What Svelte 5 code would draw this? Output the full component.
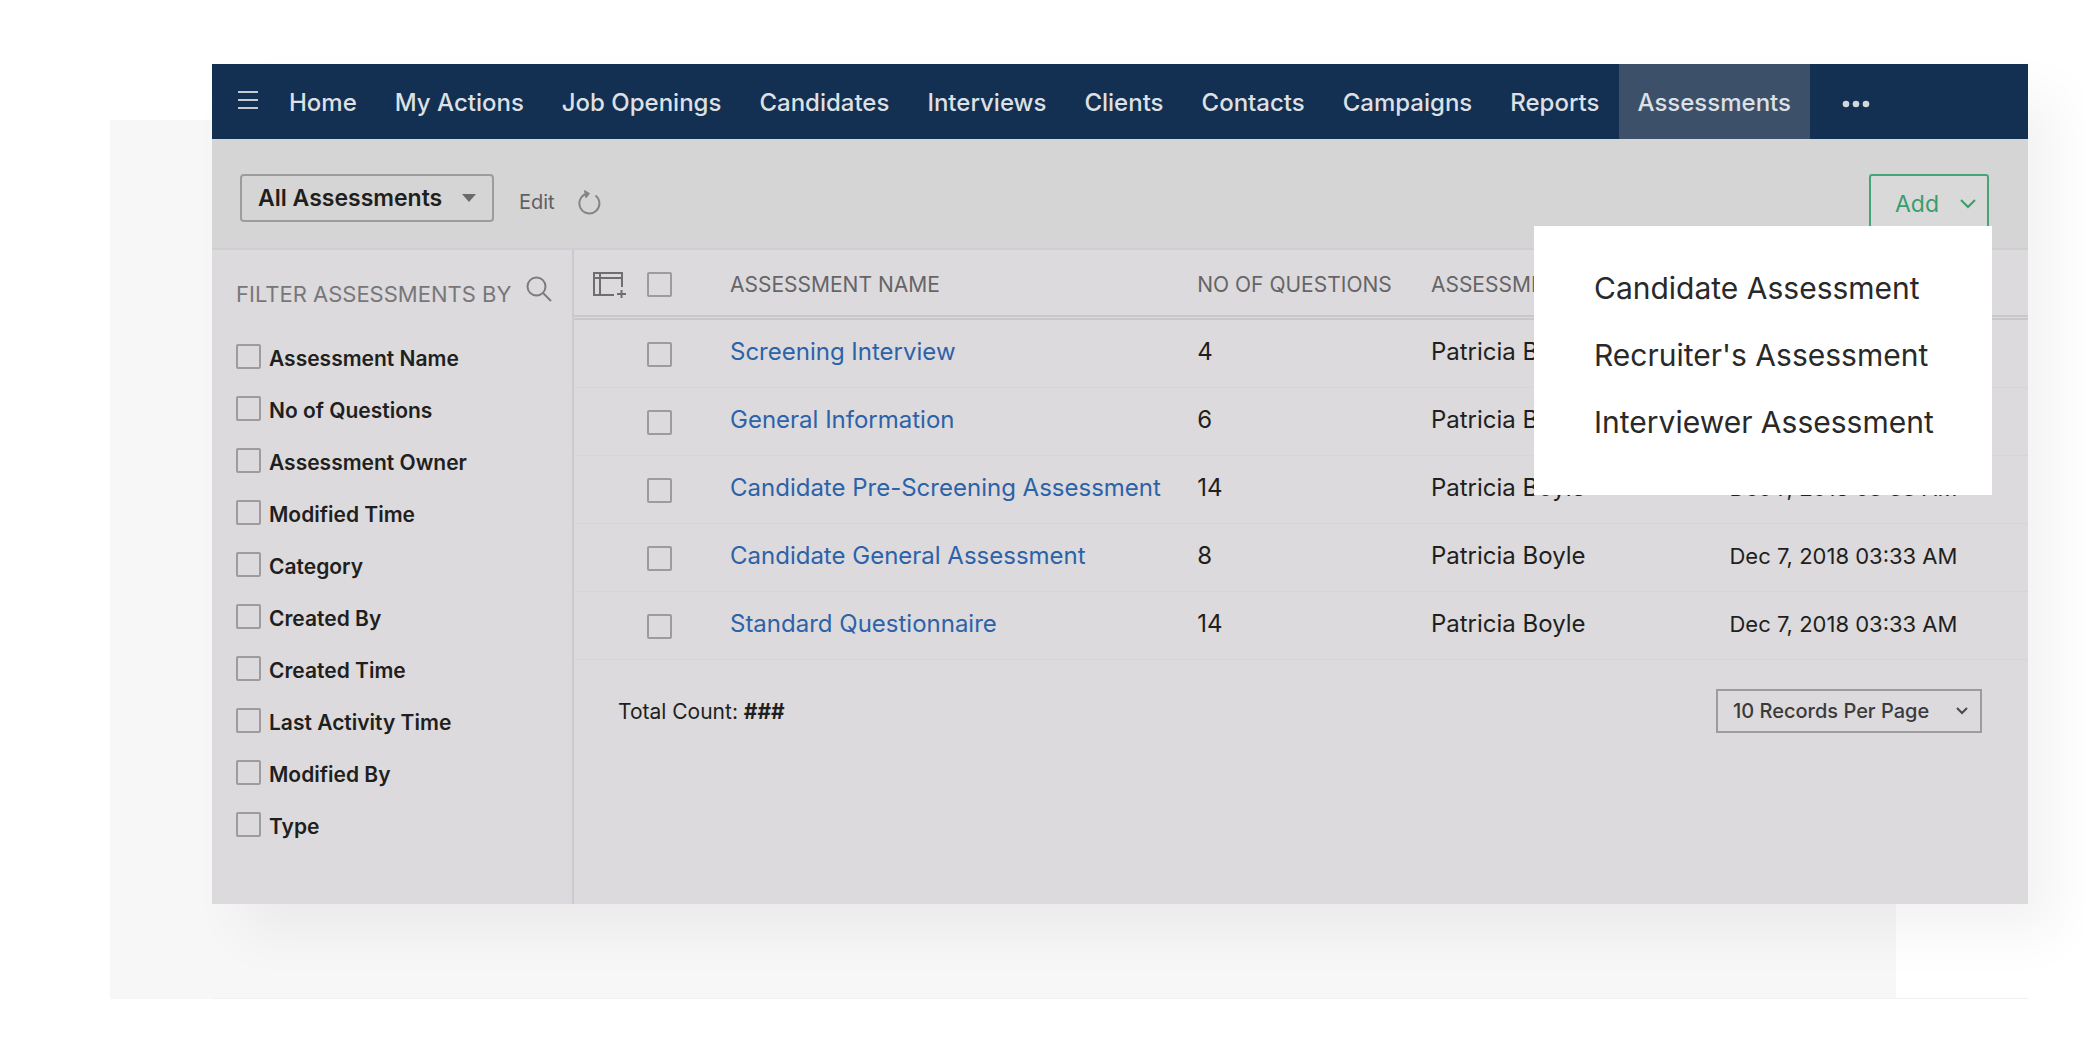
<script>
  /**
   * Assessments list view: top navigation, filter sidebar, records table
   * and the open "Add" menu, shown on a soft backdrop.
   */
  const tabs = [
    'Home',
    'My Actions',
    'Job Openings',
    'Candidates',
    'Interviews',
    'Clients',
    'Contacts',
    'Campaigns',
    'Reports',
    'Assessments',
  ];

  const filters = [
    'Assessment Name',
    'No of Questions',
    'Assessment Owner',
    'Modified Time',
    'Category',
    'Created By',
    'Created Time',
    'Last Activity Time',
    'Modified By',
    'Type',
  ];

  const owner = 'Patricia Boyle';
  const modified = 'Dec 7, 2018 03:33 AM';

  const records = [
    { name: 'Screening Interview', questions: 4 },
    { name: 'General Information', questions: 6 },
    { name: 'Candidate Pre-Screening Assessment', questions: 14 },
    { name: 'Candidate General Assessment', questions: 8 },
    { name: 'Standard Questionnaire', questions: 14 },
  ];

  const addOptions = ['Candidate Assessment', "Recruiter's Assessment", 'Interviewer Assessment'];

  let activeTab = $state('Assessments');
  let menuOpen = $state(true);
</script>

<div class="stage">
  <div class="backdrop"></div>

  <div class="frame">
    <main class="window">
      <nav class="topbar" aria-label="Modules">
        <button class="burger" aria-label="Menu">
          <svg width="22" height="20" viewBox="0 0 22 20" aria-hidden="true">
            <path d="M1 2h20M1 10h20M1 18h20" stroke="#c3cad4" stroke-width="2" />
          </svg>
        </button>
        {#each tabs as tab (tab)}
          <a
            href="#{tab.toLowerCase().replace(' ', '-')}"
            class="tab"
            class:active={tab === activeTab}
            onclick={() => (activeTab = tab)}>{tab}</a
          >
        {/each}
        <button class="more" aria-label="More modules">
          <svg width="28" height="8" viewBox="0 0 28 8" fill="#d3d6da" aria-hidden="true">
            <circle cx="4" cy="4" r="3.3" />
            <circle cx="14" cy="4" r="3.3" />
            <circle cx="24" cy="4" r="3.3" />
          </svg>
        </button>
      </nav>

      <header class="toolbar">
        <div class="picker view">
          <select aria-label="View">
            <option>All Assessments</option>
          </select>
          <svg width="14" height="8" viewBox="0 0 14 8" aria-hidden="true">
            <path d="M0 0h14L7 8z" fill="#6b6b6d" />
          </svg>
        </div>
        <a class="edit" href="#edit">Edit</a>
        <button class="refresh" aria-label="Refresh">
          <svg width="24" height="26" viewBox="0 0 24 26" fill="none" stroke="#858587" stroke-width="2" aria-hidden="true">
            <path d="M18.5 6.500A10 10 0 1 1 9 5" />
            <path d="M7.500 1.500l5 3-3.500 4.500z" fill="#858587" stroke-width="1" />
          </svg>
        </button>

        <div class="add-wrap">
          <button class="add" aria-expanded={menuOpen} onclick={() => (menuOpen = !menuOpen)}>
            Add
            <svg width="16" height="10" viewBox="0 0 16 10" fill="none" stroke="currentColor" stroke-width="2" aria-hidden="true">
              <path d="M1 1l7 7 7-7" />
            </svg>
          </button>
          {#if menuOpen}
            <div class="menu">
              {#each addOptions as option (option)}
                <button>{option}</button>
              {/each}
            </div>
          {/if}
        </div>
      </header>

      <div class="body">
        <aside class="sidebar">
          <div class="sidebar-head">
            <h2>FILTER ASSESSMENTS BY</h2>
            <button aria-label="Search filters">
              <svg width="26" height="26" viewBox="0 0 26 26" fill="none" stroke="#7c7c7e" stroke-width="2" aria-hidden="true">
                <circle cx="10.500" cy="10.500" r="9" />
                <path d="M17 17l8 8" />
              </svg>
            </button>
          </div>
          {#each filters as filter (filter)}
            <label><input type="checkbox" /><span>{filter}</span></label>
          {/each}
        </aside>

        <section class="content">
          <table>
            <thead>
              <tr>
                <th class="select">
                  <div class="select-tools">
                    <button aria-label="Manage columns">
                      <svg width="34" height="28" viewBox="0 0 34 28" fill="none" stroke="#6e6e70" stroke-width="2" aria-hidden="true">
                        <path d="M22 24H2V2h28v14M2 7h28M8 2v22" />
                        <path d="M29.500 19v8M25 23h9" />
                      </svg>
                    </button>
                    <input type="checkbox" aria-label="Select all" />
                  </div>
                </th>
                <th class="name">ASSESSMENT NAME</th>
                <th class="count">NO OF QUESTIONS</th>
                <th class="owner">ASSESSMENT OWNER</th>
                <th class="time" aria-label="Modified Time"></th>
              </tr>
            </thead>
            <tbody>
              {#each records as record (record.name)}
                <tr>
                  <td class="check"><input type="checkbox" aria-label="Select {record.name}" /></td>
                  <td><a href="#record">{record.name}</a></td>
                  <td>{record.questions}</td>
                  <td>{owner}</td>
                  <td class="date">{modified}</td>
                </tr>
              {/each}
            </tbody>
          </table>

          <footer>
            <span>Total Count: <b>###</b></span>
            <div class="picker pages">
              <select aria-label="Records per page">
                <option>10 Records Per Page</option>
              </select>
              <svg width="12" height="8" viewBox="0 0 12 8" fill="none" stroke="#4a4a4c" stroke-width="2" aria-hidden="true">
                <path d="M1 1l5 5 5-5" />
              </svg>
            </div>
          </footer>
        </section>
      </div>
    </main>
  </div>
</div>

<style>
  :global(body) {
    background: #fff;
  }

  /* The backdrop and the window share one grid so they can overlap. */
  .stage {
    display: grid;
    grid-template-columns: 110px 102px minmax(0, 1fr) 132px 56px;
    grid-template-rows: 64px 56px auto 64px;
    overflow: hidden;
    font-family: Inter, 'Open Sans', sans-serif;
    font-size: 24px;
    color: #1f1f20;
  }

  .backdrop {
    grid-column: 2 / 4;
    grid-row: 3;
    background: #f7f7f8;
  }

  .frame {
    grid-column: 3 / 5;
    grid-row: 2 / 4;
    padding-bottom: 94px;
    border-bottom: 1px solid #f1f0f3;
  }

  .window {
    background: #dcdadd;
    box-shadow: 28px 30px 50px rgba(0, 0, 0, 0.05);
  }

  button,
  select,
  input {
    margin: 0;
    font: inherit;
    color: inherit;
  }

  button {
    display: flex;
    align-items: center;
    padding: 0;
    border: 0;
    background: none;
  }

  a {
    text-decoration: none;
  }

  input[type='checkbox'] {
    appearance: none;
    display: block;
    flex-shrink: 0;
    width: 25px;
    height: 25px;
    border: 2px solid #9c9b9e;
    border-radius: 2px;
  }

  .topbar {
    display: flex;
    height: 75px;
    padding-left: 25px;
    background: #132f52;
  }

  .burger {
    align-self: center;
    margin-right: 11px;
    padding-bottom: 4px;
  }

  .tab {
    display: flex;
    align-items: center;
    padding: 2px 19px 0;
    font-weight: 500;
    white-space: nowrap;
    color: #dde0e4;
  }

  .tab.active {
    background: #3c506a;
  }

  .more {
    padding: 4px 32px 0;
  }

  .toolbar {
    display: flex;
    align-items: flex-start;
    height: 111px;
    padding: 35px 39px 0 28px;
    box-sizing: border-box;
    border-bottom: 2px solid #d0ced1;
    background: #d6d5d6;
  }

  .picker {
    position: relative;
    display: flex;
    align-items: center;
  }

  .picker select {
    width: 100%;
    height: 100%;
    border: 2px solid #9c9b9e;
    background: transparent;
    appearance: none;
  }

  .picker svg {
    position: absolute;
    pointer-events: none;
  }

  .view {
    width: 254px;
    height: 48px;
    font-size: 23px;
  }

  .view select {
    padding: 0 16px;
    border-radius: 4px;
    font-weight: 600;
  }

  .view svg {
    right: 18px;
  }

  .edit {
    padding: 16px 22px 0 25px;
    font-size: 20px;
    color: #606062;
  }

  .refresh {
    padding-top: 15px;
  }

  .add-wrap {
    position: relative;
    margin-left: auto;
  }

  .add {
    gap: 21px;
    height: 60px;
    padding: 0 11px 0 24px;
    border: 2px solid #45a577;
    border-radius: 3px;
    background: #d9d9d9;
    font-size: 23px;
    color: #3a9d6c;
  }

  .menu {
    position: absolute;
    top: 52px;
    right: -3px;
    z-index: 1;
    box-sizing: border-box;
    width: 458px;
    padding: 28px 60px 40px;
    background: #fff;
  }

  .menu button {
    height: 67px;
    font-size: 30px;
    white-space: nowrap;
    color: #29292a;
  }

  .body {
    display: flex;
  }

  .sidebar {
    box-sizing: border-box;
    width: 362px;
    flex-shrink: 0;
    padding: 21px 20px 54px 24px;
    border-right: 2px solid #cccace;
  }

  .sidebar-head {
    display: flex;
    align-items: center;
    justify-content: space-between;
    height: 36px;
    margin-bottom: 23px;
  }

  .sidebar-head h2 {
    margin: 0;
    padding-top: 10px;
    font-size: 22px;
    font-weight: 400;
    white-space: nowrap;
    color: #77777a;
  }

  .sidebar label {
    display: flex;
    align-items: center;
    gap: 8px;
    height: 52px;
    font-size: 21px;
    font-weight: 600;
  }

  .sidebar label span {
    padding-top: 4px;
  }

  .content {
    flex: 1;
    min-width: 0;
  }

  table {
    width: 100%;
    border-collapse: separate;
    border-spacing: 0;
    table-layout: fixed;
  }

  th,
  td {
    padding: 0;
    text-align: left;
    white-space: nowrap;
  }

  th {
    height: 61px;
    padding-top: 4px;
    border-bottom: 5px double #c8c7ca;
    font-size: 21px;
    font-weight: 400;
    color: #656567;
  }

  td {
    height: 63px;
    padding-bottom: 4px;
    border-bottom: 1px solid #d7d5d8;
  }

  .check {
    height: 65px;
    padding: 2px 0 0 73px;
  }

  td a {
    color: #2c62a8;
  }

  .date {
    font-size: 22px;
  }

  .select {
    width: 156px;
  }

  .name {
    width: 36%;
  }

  .count {
    width: 18%;
  }

  .owner {
    width: 23%;
  }

  .time {
    width: 23%;
  }

  .select-tools {
    display: flex;
    align-items: center;
    gap: 21px;
    padding-left: 18px;
  }

  footer {
    display: flex;
    align-items: center;
    justify-content: space-between;
    padding: 29px 46px 0 44px;
    font-size: 21px;
  }

  .pages {
    width: 266px;
    height: 44px;
    font-size: 20px;
  }

  .pages select {
    padding: 0 15px;
    font-weight: 500;
    color: #3a3a3c;
  }

  .pages svg {
    right: 14px;
  }
</style>
